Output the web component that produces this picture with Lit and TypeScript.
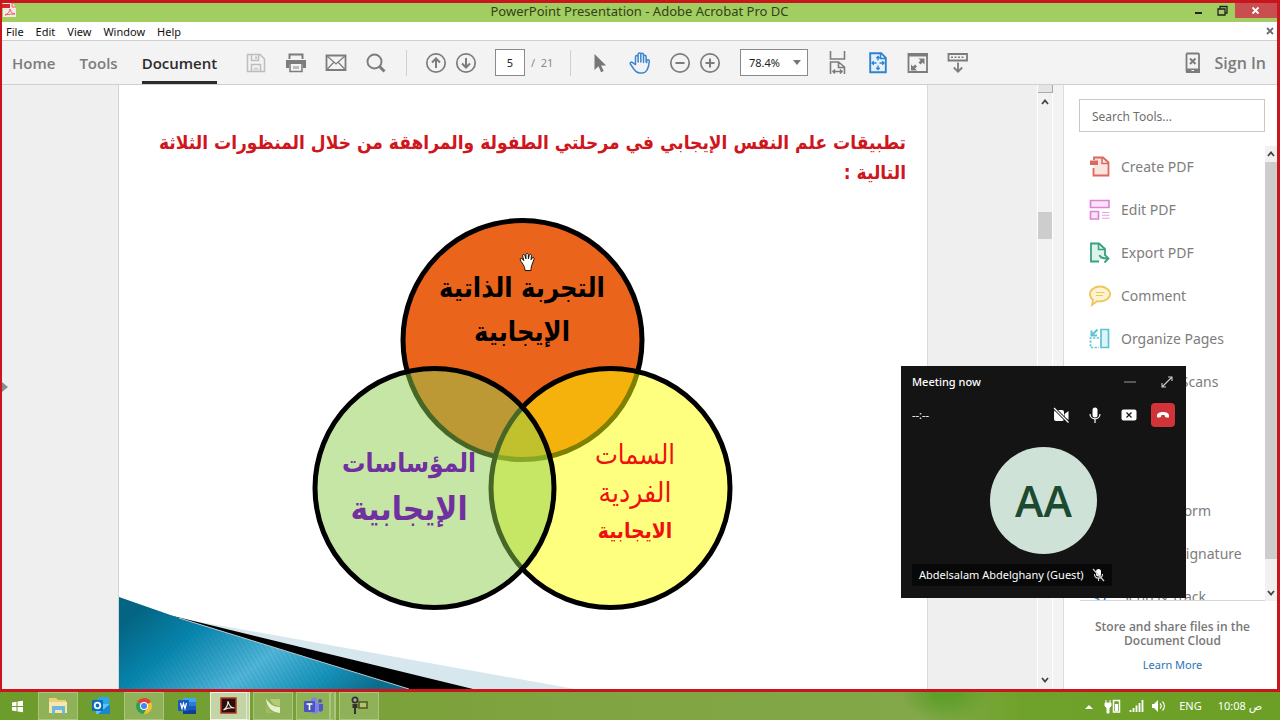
import { LitElement, html, css, svg } from "lit";
import { customElement } from "lit/decorators.js";

const icon = (w: number, h: number, body: unknown) =>
  html`<svg width=${w} height=${h} viewBox="0 0 ${w} ${h}" fill="none" aria-hidden="true">${body}</svg>`;

const save = icon(20, 20, svg`<path d="M1.500 1.500h12.500l4.500 4.500v12.500h-17z M5.500 1.500v6h7v-6 M5.500 18.500v-7h9v7 M10 3.500v2.500" stroke="#bdbdbd" stroke-width="1.500"/><path d="M7.500 14.500h5v3h-5z" fill="#d4d4d4"/>`);
const print = icon(22, 20, svg`<path d="M4.500 6V1.500h13V6" stroke="#7c7c7c" stroke-width="2"/><path d="M1 7h20v8h-3v-4H4v4H1z" fill="#7c7c7c"/><path d="M5 11v7.500h12V11" stroke="#7c7c7c" stroke-width="1.600"/><path d="M8 13h6v3H8z" fill="#bbb"/>`);
const mail = icon(22, 18, svg`<path d="M1.500 1.500h19v14.500h-19z" stroke="#7c7c7c" stroke-width="1.800"/><path d="M2 2l9 8 9-8M2 15.500l6.500-7M20 15.500l-6.500-7" stroke="#7c7c7c" stroke-width="1.200"/>`);
const search = icon(20, 20, svg`<circle cx="8.500" cy="8.500" r="7" stroke="#7c7c7c" stroke-width="1.900"/><path d="M13.500 13.500l5 5" stroke="#7c7c7c" stroke-width="3"/>`);
const circled = (d: string) => icon(22, 22, svg`<circle cx="11" cy="11" r="9.200" stroke="#7c7c7c" stroke-width="1.700"/><path d=${d} stroke="#7c7c7c" stroke-width="2"/>`);
const up = circled("M11 16V6M7 10.500l4-4 4 4");
const down = circled("M11 6v10M7 11.500l4 4 4-4");
const minus = circled("M6.500 11h9");
const plus = circled("M6.500 11h9M11 6.500v9");
const arrow = icon(14, 20, svg`<path d="M1.500 1v16l4-3.800 2.600 6 2.600-1.200-2.600-5.600h5z" fill="#777"/>`);
const hand = icon(22, 22, svg`<path d="M6.500 12.500V4.800c0-1.800 2.600-1.800 2.600 0V10V2.300c0-1.700 2.700-1.700 2.700 0V10V2.600c0-1.700 2.700-1.700 2.700 0V10.500V4.600c0-1.700 2.600-1.700 2.600 0v5l.6 1V8.800c.6-1.600 2.800-1.200 2.600.6-.2 3-1 6.500-2.500 9-1 1.500-2.300 2.600-4.500 2.600h-2.500c-2.400 0-4-1-5.500-3.300L1.300 12c-.6-1.600 1.200-2.500 2.300-1.300z" stroke="#3c86cf" stroke-width="1.500" stroke-linejoin="round"/>`);
const fitWidth = icon(18, 24, svg`<path d="M1.500 0v8h14V0 M1.500 23V11h8l6 5v7 M9.500 11v5.500h6 M4 20.500h9M6 18.500l-2 2 2 2M11 18.500l2 2-2 2" stroke="#7c7c7c" stroke-width="1.600"/>`);
const fitPage = icon(18, 22, svg`<path d="M1.200 1.200h11l4.600 4.600v14.500H1.200z" stroke="#2f82cf" stroke-width="1.900" fill="#e6f1fb"/><path d="M11.500 1v5.500H17" stroke="#2f82cf" stroke-width="1.500"/><path d="M9 4.500V8.500M9 13.500v4M3 11h4.500M10.500 11H15M7.300 6.300L9 4.500l1.700 1.800M7.300 15.700L9 17.500l1.700-1.800M4.800 9.300L3 11l1.800 1.700M13.200 9.300L15 11l-1.800 1.700" stroke="#2f82cf" stroke-width="1.300"/>`);
const fullscreen = icon(22, 22, svg`<path d="M1.500 2v18h18.500V2z" stroke="#7c7c7c" stroke-width="1.800"/><path d="M1 1h20v3.500H1z" fill="#7c7c7c"/><path d="M11.500 6.500h6v6l-2-2-2 2-2-2 2-2zM4 12.500l2 2 2-2 2 2-2 2 2 2H4z" fill="#7c7c7c"/>`);
const keyboard = icon(22, 22, svg`<path d="M1.500 2h18.500v6.500H1.500z" stroke="#7c7c7c" stroke-width="1.800"/><path d="M4 5.200h14" stroke="#7c7c7c" stroke-width="1.600" stroke-dasharray="2 1.500"/><path d="M11 10.500v9M6.800 15.500L11 19.700l4.200-4.200" stroke="#7c7c7c" stroke-width="1.800"/>`);
const phone = icon(16, 22, svg`<rect x="1.500" y="1.500" width="12.500" height="18.500" rx="1" stroke="#7c7c7c" stroke-width="1.800"/><path d="M1 16.500h14V21H1z" fill="#7c7c7c"/><path d="M5 6.500l5.500 5.500M10.500 6.500L5 12" stroke="#7c7c7c" stroke-width="2"/><path d="M6.500 18.500h2.500" stroke="#fff"/>`);
const chevUp = icon(8, 6, svg`<path d="M1 5l3-3.500L7 5" stroke="#444" stroke-width="1.800"/>`);
const chevDown = icon(8, 6, svg`<path d="M1 1l3 3.500L7 1" stroke="#444" stroke-width="1.800"/>`);

const tools = [
  { name: "Create PDF", art: svg`<path d="M5 4V1.500h9l5.500 5v13H4.500V12" stroke="#d9695f" stroke-width="1.800" fill="#fbe3e0"/><path d="M13 1.500v6h6.500" stroke="#d9695f" stroke-width="1.500"/><path d="M1 4.500h8V9H1z" fill="#d9695f"/>` },
  { name: "Edit PDF", art: svg`<path d="M1.500 1.500h18.500v7H1.500zM1.500 12.500h8v7.500h-8z" stroke="#dc85d6" stroke-width="1.700" fill="#fbe2fa"/><path d="M13 13.500h7.500M13 16.300h7.500M13 19.200h7.500" stroke="#e3a3df" stroke-width="1.100"/>` },
  { name: "Export PDF", art: svg`<path d="M10 19.500H2V1.500h8l6 5.500v6" stroke="#39a27e" stroke-width="1.800" fill="#def3ec"/><path d="M9.500 1.500v6H16" stroke="#39a27e" stroke-width="1.500"/><path d="M10.500 13c.5 3 3 3.500 8 3.500M15.500 12.500l4 4-4 4" stroke="#39a27e" stroke-width="1.800"/>` },
  { name: "Comment", art: svg`<path d="M11 1.500c5.500 0 10 3.300 10 7.500s-4.500 7.500-10 7.500c-1 0-2-.1-3-.3L3 20l1-5C2 13.600 1 11.500 1 9c0-4.200 4.500-7.500 10-7.500z" stroke="#ecc75e" stroke-width="1.800" fill="#fdf3d2"/><path d="M7 7.500h8.500M7 10.500h7" stroke="#ecc75e" stroke-width="1.100"/>` },
  { name: "Organize Pages", art: svg`<path d="M12 1.500h7.500v18H12z" stroke="#5cc3d2" stroke-width="1.700" fill="#dcf5f8"/><path d="M10 10H1.500v9.500H10" stroke="#5cc3d2" stroke-width="1.700" stroke-dasharray="2.200 1.500"/><path d="M8.500 1.500L3 7M2.500 2.500v5h5.500" stroke="#5cc3d2" stroke-width="2"/>` },
  { name: "Enhance Scans", art: svg`<path d="M2 2h16v16H2z" stroke="#39a27e" stroke-width="1.700"/>` },
  { name: "Protect", art: svg`<path d="M10 1l8 3v7c0 5-8 9-8 9s-8-4-8-9V4z" stroke="#6d7bd0" stroke-width="1.700"/>` },
  { name: "Fill & Sign", art: svg`<path d="M2 18l3-8 9-8 4 4-8 9z" stroke="#8a6fd0" stroke-width="1.700"/>` },
  { name: "Prepare Form", art: svg`<path d="M2 2h16v16H2z" stroke="#b06fd0" stroke-width="1.700"/>` },
  { name: "Request Signature", art: svg`<path d="M2 18c4-14 6-14 6-4s4-6 10 2" stroke="#6d7bd0" stroke-width="1.700"/>` },
  { name: "Send & Track", art: svg`<path d="M1 9l18-7-5 17-5-6z" stroke="#3c86cf" stroke-width="1.700"/>` },
];

const tasks = [
  { name: "File Explorer", cls: "open", art: svg`<path d="M2 3h7l2 2h8v12H2z" fill="#e9cf79"/><path d="M2 7h18v11H2z" fill="#f6e7ab"/><path d="M5 11h13v8h-3v-4H8v4H5z" fill="#6fb7dd"/>` },
  { name: "Outlook", cls: "", art: svg`<path d="M8 2h11v10H8z" fill="#2aa7ea"/><path d="M6 9h14v10H6z" fill="#5cc6f4"/><path d="M20 9v10H8z" fill="#1a87d0"/><rect x="2" y="5" width="11" height="11" rx="1" fill="#0a6cbd"/><circle cx="7.500" cy="10.500" r="2.800" stroke="#fff" stroke-width="1.800"/>` },
  { name: "Chrome", cls: "open", art: svg`<circle cx="11" cy="11" r="8" fill="#f4c22b"/><path d="M11 11L4.100 7a8 8 0 0 1 13.800 0z" fill="#dd4437"/><path d="M11 3a8 8 0 0 1 6.900 4H11z" fill="#dd4437"/><path d="M4.100 7A8 8 0 0 0 10.500 19l3.500-6-3-2z" fill="#2c9e57"/><circle cx="11" cy="11" r="4" fill="#fff"/><circle cx="11" cy="11" r="3" fill="#4285f4"/>` },
  { name: "Word", cls: "", art: svg`<path d="M7 3h13v5H7z" fill="#41a5ee"/><path d="M7 7h13v4H7z" fill="#2b7cd3"/><path d="M7 11h13v4H7z" fill="#185abd"/><path d="M7 15h13v4H7z" fill="#103f91"/><rect x="2" y="5" width="11" height="11" rx="1" fill="#185abd"/><path d="M4.500 8l1.500 5.500 1.500-5 1.500 5L10.500 8" stroke="#fff" stroke-width="1.300"/>` },
  { name: "Acrobat", cls: "open active", art: svg`<rect x="3" y="3" width="15" height="15" fill="#2a0f0c" stroke="#b5371f" stroke-width="1.500"/><path d="M5.500 15c3-2 4.500-6 4.500-9 1 5 3 7 6.500 7-4-.8-7 0-11 2z" stroke="#f2e9e5" stroke-width="1.200"/>` },
  { name: "Notes", cls: "open", art: svg`<path d="M4 4c1 9 6 13 14 14V12C11 12 8 9 4 4z" fill="#e9f0c9"/><path d="M8 4c2 5 5 7 10 7V4z" fill="#b4cc78"/><path d="M4 9v9h8C8 16 5 13 4 9z" fill="#a0bb60"/>` },
  { name: "Teams", cls: "open stack", art: svg`<circle cx="12" cy="5" r="2.800" fill="#7b83eb"/><circle cx="18" cy="6" r="2" fill="#5059c9"/><path d="M8 8h9v8c-1 3-7 4-9 0z" fill="#7b83eb"/><path d="M17 9h4v6c-1 2-3 2-4 1z" fill="#5059c9"/><rect x="2" y="6" width="11" height="11" rx="1" fill="#4b53bc"/><path d="M4.500 9h6M7.500 9v6" stroke="#fff" stroke-width="1.600"/>` },
  { name: "Connector", cls: "open", art: svg`<circle cx="7" cy="5" r="2.600" stroke="#333" stroke-width="1.800" fill="#aaa"/><path d="M4.500 9h5v4h-1.500v6h-2v-6H4.500z" fill="#333"/><path d="M11 7h8v6h-8z" stroke="#4d5a24" stroke-width="1.600" fill="#b3c36a"/>` },
];

@customElement("app-root")
export class AppRoot extends LitElement {
  static styles = css`
    :host { display: flex; flex-direction: column; height: 100vh; overflow: hidden; position: relative; font-family: "Noto Sans", "Open Sans", sans-serif; font-size: 11px; color: #222; }
    * { box-sizing: border-box; }
    button { border: 0; padding: 0; background: none; font: inherit; color: inherit; display: flex; align-items: center; justify-content: center; }
    svg { display: block; flex: none; }
    a { color: inherit; text-decoration: none; }
    .window { flex: 1; min-height: 0; display: flex; flex-direction: column; border: 3px solid #c9151e; border-left-width: 2px; background: #efefef; }
    .titlebar { height: 19px; background: #a2cd60; display: flex; align-items: flex-start; justify-content: space-between; }
    .side { width: 104px; display: flex; align-items: flex-start; height: 100%; }
    .caption { font: 13px/16px "Noto Sans", sans-serif; color: #30421a; margin: 0; }
    .winbtns { justify-content: flex-end; }
    .winbtns button { width: 24px; height: 15px; }
    .winbtns .close { width: 42px; background: #c84e50; }
    .menubar { height: 19px; background: #fff; border-bottom: 1px solid #cfcfcf; display: flex; align-items: center; gap: 12px; padding: 0 0 0 4px; color: #111; }
    .menubar .shut { margin-left: auto; width: 15px; }
    .toolbar { height: 44px; background: #f3f3f3; border-bottom: 1px solid #cfcfcf; display: flex; align-items: center; padding: 0 11px 0 10px; }
    .tabs { display: flex; gap: 24px; align-self: stretch; width: 224px; font: 600 15px/20px "Open Sans", sans-serif; color: #7c7c7c; }
    .tabs button { border-bottom: 3px solid transparent; padding-top: 3px; }
    .tabs .on { color: #2c2c2c; border-color: #2c2c2c; }
    .ic { width: 40px; height: 30px; }
    .sm { width: 30px; }
    .sep { width: 1px; height: 26px; background: #cfcfcf; margin: 0 14px 0 10px; }
    .page { width: 30px; height: 27px; border: 1px solid #8a8a8a; background: #fff; text-align: center; padding: 0; margin: 0 6px 0 14px; font: 11px "Noto Sans", sans-serif; color: #222; }
    .total { width: 29px; color: #8a8a8a; }
    .after { margin-right: 9px; }
    .zoomout { margin-left: 5px; }
    .select { display: flex; align-items: center; margin: 0 10px 0 15px; position: relative; }
    .select select { appearance: none; width: 68px; height: 27px; border: 1px solid #8a8a8a; border-radius: 0; background: #fff; padding: 0 0 0 8px; font: 11px "Noto Sans", sans-serif; color: #222; }
    .caret { position: absolute; right: 7px; }
    .sign { margin-left: auto; display: flex; gap: 14px; align-items: center; font: 600 16px/20px "Open Sans", sans-serif; color: #7c7c7c; }
    .body { flex: 1; min-height: 0; display: flex; }
    .gutter { width: 117px; display: flex; align-items: center; border-right: 1px solid #d5d5d5; }
    .slide { flex: 1; background: #fff; position: relative; overflow: hidden; border-right: 1px solid #dadada; }
    .heading { margin: 42px 21px 0; color: #cf161c; font: bold 19px/30px "DejaVu Sans Condensed", "DejaVu Sans", sans-serif; text-align: start; white-space: nowrap; }
    .diagram { position: absolute; left: 193px; top: 132px; font-family: "DejaVu Sans Condensed", "DejaVu Sans", sans-serif; }
    .diagram text { text-anchor: middle; }
    .bold { font-weight: bold; }
    .purple { fill: #7030a0; }
    .red { fill: #f00f0f; }
    .corner { position: absolute; left: 0; bottom: 0; }
    .margin { width: 109px; }
    .vbar { width: 16px; display: flex; flex-direction: column; align-items: center; background: #f1f1f1; border: solid #fff; border-width: 0 1px; }
    .split { width: 15px; height: 8px; background: #e4e4e4; border: solid #a9a9a9; border-width: 0 1px 1px 0; }
    .vbar .step { height: 18px; width: 100%; flex: none; }
    .vthumb { width: 14px; height: 27px; background: #cdcdcd; margin-top: 101px; }
    .push { margin-top: auto; }
    .grip { width: 11px; border-right: 1px solid #dcdcdc; background: #f3f3f3; }
    .panel { width: 213px; background: #fff; display: flex; flex-direction: column; }
    .search { height: 33px; margin: 14px 12px 14px 15px; border: 1px solid #c9c7be; border-radius: 0; padding: 2px 12px 0; font: 12px "Noto Sans", sans-serif; color: #666; min-width: 0; }
    .search::placeholder { color: #6f6f6f; opacity: 1; }
    .list { flex: 1; min-height: 0; display: flex; }
    .items { flex: 1; margin: 0 0 0 16px; padding: 0; list-style: none; overflow: hidden; border-bottom: 1px solid #d6d6d6; }
    .items button { height: 43px; gap: 10px; padding: 0 0 2px 9px; font: 14px/20px "Noto Sans", sans-serif; color: #7d7d7d; white-space: nowrap; }
    .lbar { width: 12px; background: #f1f1f1; display: flex; flex-direction: column; }
    .lbar button { height: 16px; }
    .lthumb { flex: 1; background: #cdcdcd; margin-bottom: 26px; }
    .promo { height: 88px; text-align: center; padding: 19px 0 0 4px; font: 600 12px/14px "Open Sans", sans-serif; color: #777; }
    .promo p { margin: 0 0 10px; }
    .promo a { font: 11px/14px "Noto Sans", sans-serif; color: #2c74b8; }
    .meeting { position: absolute; right: 94px; bottom: 122px; width: 285px; height: 232px; background: #141414; color: #fff; padding: 6px 11px 0; display: flex; flex-direction: column; font: 11px/16px "Noto Sans", sans-serif; }
    .mrow { display: flex; align-items: center; justify-content: space-between; height: 20px; }
    .mrow.ctl { height: 24px; margin-top: 11px; }
    .mtitle { font-weight: 500; }
    .mbtns { display: flex; gap: 10px; }
    .mbtns button { width: 24px; height: 24px; }
    .mbtns.wide { gap: 21px; }
    .mbtns.wide button { width: 16px; }
    .mbtns .hang { background: #d13438; border-radius: 4px; }
    .avatar { align-self: center; width: 107px; height: 107px; border-radius: 50%; background: #cfe2d7; color: #1c4a30; display: flex; align-items: center; justify-content: center; font: 600 43px/50px "Open Sans", sans-serif; margin-top: 20px; }
    .who { align-self: flex-start; margin-top: 10px; height: 22px; padding: 0 7px; background: #080808; display: flex; align-items: center; gap: 8px; border-radius: 2px; }
    .taskbar { height: 28px; flex: none; display: flex; align-items: stretch; gap: 3px; background: radial-gradient(ellipse 60px 40px at 945px 0, #5f9f2c 0 20%, transparent 75%), linear-gradient(90deg, #6c9c2c, #7fa33f 40%, #83a849 72%, #6fa22a 80%, #6b9f25); color: #fff; }
    .taskbar .start { width: 35px; }
    .task { width: 40px; }
    .task.open { border: 1px solid #a9c67d; background: #8fb158; }
    .task.active { background: #c3d5a6; border-color: #eef4e2; border-right: 4px double #dfeacb; }
    .task.stack { border-right: 7px double #a9c67d; }
    .tray { margin-left: auto; display: flex; align-items: center; padding-right: 18px; font: 11px/16px "Noto Sans", "DejaVu Sans", sans-serif; }
    .tray svg { margin-right: 7px; }
    .lang { margin: 0 16px 0 6px; }
  `;

  render() {
    return html`
      <main class="window">
        <header class="titlebar">
          <div class="side">${icon(16, 15, svg`<path d="M1 0h9l4 4v10H1z" fill="#f7e9e7"/><path d="M0 1h8v4H0z" fill="#d12a22"/><path d="M3 12c3-1 5-4 5-6 1 3 2 5 5 5-3 0-6 0-10 1zM10 0v4h4" stroke="#e0605a" stroke-width="1"/>`)}</div>
          <h1 class="caption">PowerPoint Presentation - Adobe Acrobat Pro DC</h1>
          <div class="side winbtns">
            <button aria-label="Minimize">${icon(10, 12, svg`<path d="M1 8h7" stroke="#222" stroke-width="2"/>`)}</button>
            <button aria-label="Restore">${icon(11, 12, svg`<path d="M1 4h7v6H1zM3 4V1.500h7V8H8" stroke="#222" stroke-width="1.300"/>`)}</button>
            <button class="close" aria-label="Close">${icon(9, 9, svg`<path d="M1.500 1.500l6 6M7.500 1.500l-6 6" stroke="#fff" stroke-width="1.800"/>`)}</button>
          </div>
        </header>
        <nav class="menubar">
          <button>File</button><button>Edit</button><button>View</button><button>Window</button><button>Help</button>
          <button class="shut" aria-label="Close document">${icon(8, 8, svg`<path d="M1 1l6 6M7 1L1 7" stroke="#6a6a6a" stroke-width="1.800"/>`)}</button>
        </nav>
        <div class="toolbar">
          <div class="tabs"><button>Home</button><button>Tools</button><button class="on">Document</button></div>
          <button class="ic" aria-label="Save">${save}</button>
          <button class="ic" aria-label="Print">${print}</button>
          <button class="ic" aria-label="Email">${mail}</button>
          <button class="ic" aria-label="Find">${search}</button>
          <span class="sep"></span>
          <button class="ic sm" aria-label="Previous page">${up}</button>
          <button class="ic sm" aria-label="Next page">${down}</button>
          <input class="page" aria-label="Page number" value="5" />
          <span class="total">/&nbsp; 21</span>
          <span class="sep after"></span>
          <button class="ic" aria-label="Select">${arrow}</button>
          <button class="ic" aria-label="Pan">${hand}</button>
          <button class="ic sm zoomout" aria-label="Zoom out">${minus}</button>
          <button class="ic sm" aria-label="Zoom in">${plus}</button>
          <label class="select">
            <select aria-label="Zoom level"><option>78.4%</option></select>
            <svg class="caret" width="8" height="5" viewBox="0 0 8 5"><path d="M0 0h8L4 5z" fill="#777" /></svg>
          </label>
          <button class="ic" aria-label="Fit width">${fitWidth}</button>
          <button class="ic" aria-label="Fit page">${fitPage}</button>
          <button class="ic" aria-label="Full screen">${fullscreen}</button>
          <button class="ic" aria-label="Read mode">${keyboard}</button>
          <button class="sign">${phone}<span>Sign In</span></button>
        </div>
        <div class="body">
          <div class="gutter">${icon(6, 10, svg`<path d="M0 0l6 5-6 5z" fill="#8b8b8b"/>`)}</div>
          <article class="slide">
            <h2 class="heading" dir="rtl">تطبيقات علم النفس الإيجابي في مرحلتي الطفولة والمراهقة من خلال المنظورات الثلاثة<br />التالية :</h2>
            <svg class="diagram" width="422" height="396" viewBox="312 217 422 396">
              <g stroke="#000" stroke-width="5">
                <circle cx="522.500" cy="340" r="119.500" fill="#eb641b" />
                <circle cx="610.500" cy="488" r="119.500" fill="#ffff00" fill-opacity="0.5" />
                <circle cx="434.500" cy="488" r="119.500" fill="#8dcd4d" fill-opacity="0.5" />
              </g>
              <g direction="rtl">
                <text class="bold" x="522" y="297" font-size="27">التجربة الذاتية</text>
                <text class="bold" x="522" y="341" font-size="27">الإيجابية</text>
                <text class="bold purple" x="409" y="472" font-size="26">المؤساسات</text>
                <text class="bold purple" x="409" y="520" font-size="33">الإيجابية</text>
                <text class="red" x="635" y="464" font-size="27">السمات</text>
                <text class="red" x="635" y="502" font-size="28">الفردية</text>
                <text class="bold red" x="635" y="538" font-size="21">الايجابية</text>
              </g>
              <path d="M524 263c-1-2-3-4-2.500-5 .8-1 2 .3 3 1.500l-1-4c0-1.500 1.500-1.500 2 0l.8 2.500v-3.500c.2-1.400 1.700-1.400 2 0v3.500l.8-3c.5-1.200 1.800-1 1.800.3l-.4 3.500 1-1.500c.8-1 2-.3 1.500 1l-2 5.500c-.5 1.500-.5 3-.5 4h-5c0-2-.7-3.500-1.500-4.800z" transform="translate(-105.600 -50.800) scale(1.200)" fill="#fff" stroke="#111" stroke-width="0.800" />
            </svg>
            <svg class="corner" width="460" height="92" viewBox="0 0 460 92" aria-hidden="true">
              <defs>
                <linearGradient id="teal" x1="0" y1="0.300" x2="1" y2="0.700">
                  <stop offset="0" stop-color="#046482" /><stop offset="0.250" stop-color="#0785ad" /><stop offset="0.560" stop-color="#51b5d8" /><stop offset="0.800" stop-color="#1793b9" /><stop offset="1" stop-color="#0b6c8c" />
                </linearGradient>
                <pattern id="weave" width="4" height="4" patternUnits="userSpaceOnUse" patternTransform="rotate(-30)"><path d="M0 0v4" stroke="#04658a" stroke-opacity="0.160" stroke-width="2" /></pattern>
              </defs>
              <path d="M70 23L456 92H340z" fill="#d7e7ee" />
              <path d="M50 18L354 92H286z" fill="#000" />
              <path d="M0 0l60 21 230 71H0z" fill="url(#teal)" />
              <path d="M0 0l60 21 230 71H0z" fill="url(#weave)" />
              <path d="M60 21l230 71" stroke="#b8c9d0" stroke-width="1" />
            </svg>
          </article>
          <div class="margin"></div>
          <div class="vbar">
            <span class="split"></span>
            <button class="step" aria-label="Scroll up">${chevUp}</button>
            <span class="vthumb"></span>
            <button class="step push" aria-label="Scroll down">${chevDown}</button>
          </div>
          <div class="grip"></div>
          <aside class="panel">
            <input class="search" type="search" aria-label="Search Tools" placeholder="Search Tools..." />
            <div class="list">
              <ul class="items">${tools.map((t) => html`<li><button>${icon(22, 22, t.art)}<span>${t.name}</span></button></li>`)}</ul>
              <div class="lbar">
                <button aria-label="Scroll tools up">${chevUp}</button>
                <span class="lthumb"></span>
                <button aria-label="Scroll tools down">${chevDown}</button>
              </div>
            </div>
            <footer class="promo"><p>Store and share files in the<br />Document Cloud</p><a href="#">Learn More</a></footer>
          </aside>
        </div>
      </main>
      <section class="meeting">
        <div class="mrow">
          <span class="mtitle">Meeting now</span>
          <div class="mbtns wide">
            <button aria-label="Minimize call">${icon(12, 12, svg`<path d="M0 6h12" stroke="#9a9a9a"/>`)}</button>
            <button aria-label="Expand call">${icon(12, 12, svg`<path d="M1 11L11 1M7 1h4v4M1 7v4h4" stroke="#ccc" stroke-width="1.100"/>`)}</button>
          </div>
        </div>
        <div class="mrow ctl">
          <span>--:--</span>
          <div class="mbtns">
            <button aria-label="Camera">${icon(18, 16, svg`<rect x="2" y="3" width="10" height="11" rx="2" fill="#fff"/><path d="M12.500 7l4-3v9l-4-3z" fill="#fff"/><path d="M2 1l14 14" stroke="#141414" stroke-width="3"/><path d="M2 1l14.500 14.500" stroke="#fff" stroke-width="1.200"/>`)}</button>
            <button aria-label="Microphone">${icon(12, 16, svg`<rect x="3.500" y="0.500" width="5" height="10" rx="2.500" fill="#fff"/><path d="M1 7c0 6.500 10 6.500 10 0M6 12v4" stroke="#fff" stroke-width="1.200"/>`)}</button>
            <button aria-label="Stop sharing">${icon(16, 12, svg`<rect x="0.500" y="0.500" width="15" height="11" rx="2" fill="#fff"/><path d="M5.500 3.500l5 5M10.500 3.500l-5 5" stroke="#141414" stroke-width="1.200"/>`)}</button>
            <button class="hang" aria-label="Leave call">${icon(14, 8, svg`<path d="M1 5.500C.5 2 4 1 7 1s6.500 1 6 4.500c0 1-.8 1.300-1.600 1.100l-1.700-.4c-.8-.3-.9-.8-.9-1.900-1.200-.5-2.400-.5-3.600 0 0 1.100-.1 1.600-.9 1.900l-1.700.4C1.800 6.800 1 6.500 1 5.500z" fill="#fff"/>`)}</button>
          </div>
        </div>
        <div class="avatar">AA</div>
        <div class="who"><span>Abdelsalam Abdelghany (Guest)</span>${icon(13, 14, svg`<rect x="4" y="1" width="5" height="7.500" rx="2.500" fill="#fff"/><path d="M2.500 6c0 5.500 8 5.500 8 0M6.500 10v3" stroke="#ddd" stroke-width="1.100"/><path d="M1 1l11 12" stroke="#ccc" stroke-width="1.300"/>`)}</div>
      </section>
      <footer class="taskbar">
        <button class="start" aria-label="Start">${icon(13, 13, svg`<path d="M1 2.500l4.500-.7V6H1zM6.500 1.600L12 .8V6H6.500zM1 7h4.500v4.200L1 10.500zM6.500 7H12v5.200l-5.500-.8z" fill="#fff"/>`)}</button>
        ${tasks.map((t) => html`<button class="task ${t.cls}" aria-label=${t.name}>${icon(22, 22, t.art)}</button>`)}
        <div class="tray">
          ${icon(8, 5, svg`<path d="M0 5l4-4 4 4z" fill="#fff"/>`)}
          ${icon(22, 16, svg`<path d="M6 2v3M10 2v3M5 5h6v3l-2 2v5H7v-5L5 8z" fill="#fff" stroke="#fff" stroke-width="1"/><rect x="13.500" y="2.500" width="6" height="11.500" stroke="#fff" stroke-width="1.500"/><path d="M15 6h3v7h-3z" fill="#fff"/>`)}
          ${icon(15, 14, svg`<path d="M1.500 11v2M4.500 9v4M7.500 6.500V13M10.500 4v9M13.500 1v12" stroke="#fff" stroke-width="1.800"/>`)}
          ${icon(15, 14, svg`<path d="M1 5h2l4-4v12L3 9H1z" fill="#fff"/><path d="M9 4.500c1.500 1.500 1.500 3.500 0 5M11.500 2.500c2.500 2.500 2.500 6.500 0 9" stroke="#fff" stroke-width="1.100"/>`)}
          <span class="lang">ENG</span>
          <time>10:08 ص</time>
        </div>
      </footer>
    `;
  }
}
